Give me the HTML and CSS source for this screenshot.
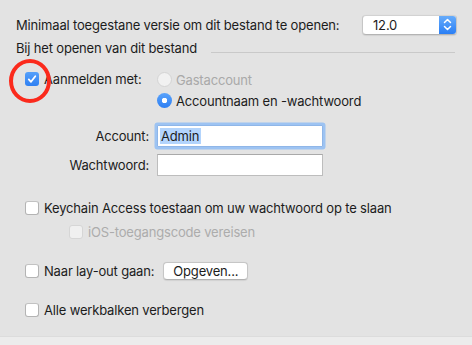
FILE: index.html
```html
<!DOCTYPE html>
<html lang="nl">
<head>
    <meta charset="UTF-8">
    <title>Openen</title>
    <link rel="stylesheet" href="styles.css">
</head>
<body>
    <div class="pane">
        <div class="version-row">
            <span>Minimaal toegestane versie om dit bestand te openen:</span>
            <div class="popup">
                <span class="popup-value">12.0</span>
                <span class="popup-arrows">
                    <svg width="17" height="19" viewBox="0 0 17 19"><path d="M5.5 7.5 L8.5 4.5 L11.5 7.5 M5.5 11.5 L8.5 14.5 L11.5 11.5" fill="none" stroke="#fff" stroke-width="1.5" stroke-linecap="round" stroke-linejoin="round"/></svg>
                </span>
            </div>
        </div>

        <div class="section-title">
            <span>Bij het openen van dit bestand</span>
            <div class="rule"></div>
        </div>

        <div class="login">
            <div class="check-row login-check">
                <span class="box checked">
                    <svg width="14" height="14" viewBox="0 0 14 14"><path d="M3.8 7.4 L6 9.8 L10.3 4.2" fill="none" stroke="#fff" stroke-width="1.8" stroke-linecap="round" stroke-linejoin="round"/></svg>
                    <span class="ring"></span>
                </span>
                Aanmelden met:
            </div>
            <div class="radios">
                <div class="radio-row disabled"><span class="radio"></span>Gastaccount</div>
                <div class="radio-row"><span class="radio on"></span>Accountnaam en -wachtwoord</div>
            </div>
        </div>

        <div class="fields">
            <div class="field">
                <span class="field-label">Account:</span>
                <span class="input focus"><span class="selected">Admin</span></span>
            </div>
            <div class="field">
                <span class="field-label">Wachtwoord:</span>
                <span class="input"></span>
            </div>
        </div>

        <div class="check-row keychain"><span class="box"></span>Keychain Access toestaan om uw wachtwoord op te slaan</div>
        <div class="check-row ios disabled"><span class="box"></span>iOS-toegangscode vereisen</div>
        <div class="check-row layout"><span class="box"></span>Naar lay-out gaan:<span class="button">Opgeven...</span></div>
        <div class="check-row toolbars"><span class="box"></span>Alle werkbalken verbergen</div>
    </div>
    <div class="footer"></div>
</body>
</html>
```

FILE: styles.css
```css
body {
    margin: 0;
    background-color: #e3e3e3;
    color: #1c1c1c;
    font-family: Inter, "Liberation Sans", sans-serif;
    font-size: 13px;
    letter-spacing: -0.17px;
    width: 472px;
    height: 345px;
    overflow: hidden;
}
.pane {
    height: 322px;
    padding: 14px 15px 0 16px;
}
.version-row {
    display: flex;
    align-items: center;
    justify-content: space-between;
    height: 21px;
}
.popup {
    display: flex;
    width: 95px;
    height: 20px;
    background-color: #fff;
    border: 1px solid #c6c6c6;
    border-top-color: #d2d2d2;
    border-bottom-color: #b4b4b4;
    border-radius: 4px;
    box-sizing: border-box;
    box-shadow: 0 0.5px 1px rgba(0, 0, 0, 0.08);
    overflow: hidden;
}
.popup-value {
    flex: 1;
    padding-left: 10px;
    line-height: 18px;
}
.popup-arrows {
    width: 17px;
    height: 19px;
    margin-top: -0.5px;
    background: linear-gradient(#6aaefb, #2a7ff5);
}
.popup-arrows svg {
    display: block;
}
.section-title {
    display: flex;
    align-items: center;
    height: 14px;
    margin-top: 6px;
}
.rule {
    flex: 1;
    height: 1px;
    margin: 8px 2px 0 14px;
    background-color: #c9c9c9;
}
.login {
    display: flex;
    margin-top: 17px;
    padding-left: 9px;
}
.login-check {
    width: 132px;
    height: 15px;
    align-self: flex-start;
}
.radios {
    display: flex;
    flex-direction: column;
    gap: 6px;
}
.radio-row {
    display: flex;
    align-items: center;
    height: 15px;
}
.radio-row.disabled {
    color: #a9a9a9;
}
.radio {
    width: 15px;
    height: 15px;
    margin-right: 4px;
    border-radius: 50%;
    box-sizing: border-box;
    border: 1px solid #d4d4d4;
    background-color: #f1f1f1;
}
.radio.on {
    border: none;
    background: radial-gradient(circle, #fff 0 2.5px, transparent 3px), linear-gradient(#5aa3fb, #2d7ff3);
}
.check-row {
    display: flex;
    align-items: center;
    height: 14px;
    padding-left: 9px;
}
.login .check-row {
    padding-left: 0;
}
.box {
    position: relative;
    width: 14px;
    height: 14px;
    margin-right: 5px;
    flex-shrink: 0;
    box-sizing: border-box;
    border: 1px solid #b4b4b4;
    border-top-color: #c2c2c2;
    border-radius: 3px;
    background-color: #fff;
}
.box.checked {
    border: none;
    background: linear-gradient(#56a0fa, #2f80f2);
}
.box svg {
    display: block;
}
.ring {
    position: absolute;
    left: -16px;
    top: -13px;
    width: 42px;
    height: 44px;
    box-sizing: border-box;
    border: 4.5px solid #fb2a1c;
    border-radius: 50%;
}
.fields {
    display: flex;
    flex-direction: column;
    gap: 7px;
    margin-top: 17px;
}
.field {
    display: flex;
    align-items: center;
    height: 22px;
}
.field-label {
    width: 133px;
    padding-right: 8px;
    text-align: right;
}
.input {
    width: 166px;
    height: 22px;
    box-sizing: border-box;
    border: 1px solid #bdbdbd;
    border-top-color: #a9a9a9;
    background-color: #fff;
    padding: 2px 2px;
    line-height: 16px;
}
.input.focus {
    border-color: #8fb6e8;
    box-shadow: 0 0 0 2.5px #9dc3f2;
    border-radius: 1px;
}
.selected {
    display: inline-block;
    background-color: #b3d4fc;
    padding: 0 2px 0 1px;
}
.keychain {
    margin-top: 25px;
}
.ios {
    margin-top: 10px;
    padding-left: 53px;
}
.disabled {
    color: #acacac;
}
.disabled .box {
    border-color: #d6d6d6;
    background-color: #f0f0f0;
}
.layout {
    height: 18px;
    margin-top: 23px;
}
.button {
    margin-left: 9px;
    width: 85px;
    height: 18px;
    line-height: 16px;
    box-sizing: border-box;
    text-align: center;
    background-color: #fff;
    border: 1px solid #c6c6c6;
    border-bottom-color: #b2b2b2;
    border-radius: 4px;
    box-shadow: 0 0.5px 1px rgba(0, 0, 0, 0.08);
}
.toolbars {
    margin-top: 23px;
}
.footer {
    height: 9px;
    border-top: 1px solid #dcdcdc;
    background-color: #ececec;
}
```
